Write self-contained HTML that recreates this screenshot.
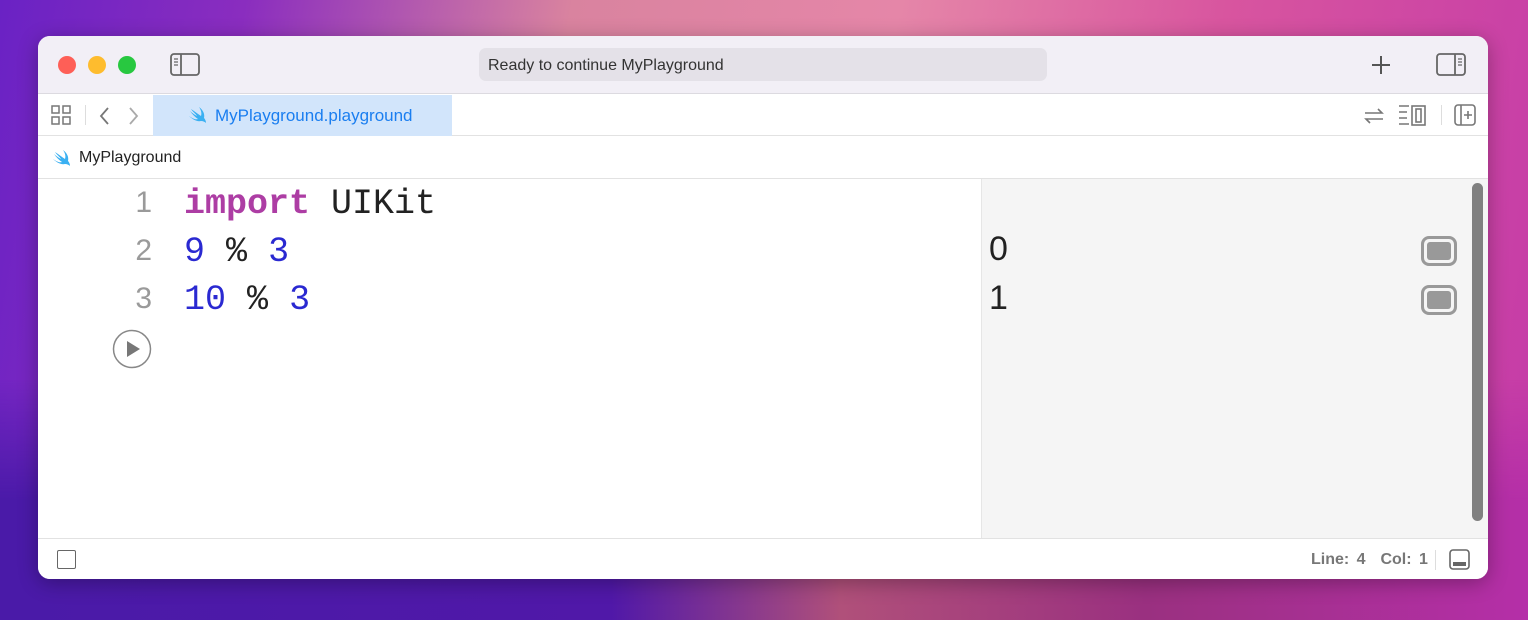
<!DOCTYPE html>
<html><head><meta charset="utf-8"><style>
*{margin:0;padding:0;box-sizing:border-box}
body{width:1528px;height:620px;overflow:hidden;position:relative;font-family:"Liberation Sans",sans-serif;
background:linear-gradient(100deg,#6a22c4 0%,#8a2dbf 15%,#d9839f 35%,#e586a8 55%,#d8559f 75%,#c43aa8 100%)}
.bg2{position:absolute;left:0;top:380px;width:1528px;height:240px;background:linear-gradient(90deg,#4a1aa8 0%,#5018a8 40%,#b0507a 55%,#9a3080 75%,#b52fa8 100%);-webkit-mask-image:linear-gradient(180deg,transparent 0%,#000 50%);mask-image:linear-gradient(180deg,transparent 0%,#000 50%)}
.win{position:absolute;left:38px;top:36px;width:1450px;height:543px;border-radius:12px;overflow:hidden;background:#fff;box-shadow:0 4px 20px rgba(0,0,0,.3)}
.title{position:absolute;left:0;top:0;width:100%;height:58px;background:#f2eff6;border-bottom:1px solid #dcdae0}
.dot{position:absolute;top:20px;width:18px;height:18px;border-radius:50%}
.addr{position:absolute;left:441px;top:12px;width:568px;height:33px;border-radius:7px;background:#e4e1e8;font-size:16px;color:#333;padding:9px 9px}
.tabs{position:absolute;left:0;top:59px;width:100%;height:41px;border-bottom:1px solid #e2e2e2;background:#fff}
.tab{position:absolute;left:115px;top:0;width:299px;height:41px;background:#d2e5fb;color:#1a7ef0;font-size:17px;padding:11px 0 0 62px}
.crumb{position:absolute;left:0;top:101px;width:100%;height:42px;border-bottom:1px solid #e2e2e2;font-size:16px;color:#222;padding:12px 0 0 41px}
.edit{position:absolute;left:0;top:143px;width:100%;height:359px}
.res{position:absolute;left:943px;top:0;width:507px;height:359px;background:#f5f5f5;border-left:1px solid #e6e6e6}
.code{position:absolute;font-family:"Liberation Mono",monospace;font-size:35px;line-height:48px}
.ln{position:absolute;left:88px;width:26px;text-align:right;font-family:"Liberation Sans",sans-serif;font-size:30px;color:#9a9a9a}
.kw{color:#ad3da4}.num{color:#2a29d1}.pl{color:#222}
.status{position:absolute;left:0;top:502px;width:100%;height:41px;border-top:1px solid #e2e2e2;background:#fff}
.rb{position:absolute;left:1383px;width:36px;height:30px;border:3px solid #999;border-radius:8px}
.rb::after{content:"";position:absolute;left:3px;top:3px;right:3px;bottom:3px;background:#999;border-radius:3px}
.sw{position:absolute}
</style></head><body>
<div class="bg2"></div>
<div class="win">
 <div class="title">
  <div class="dot" style="left:20px;background:#fe5f57"></div>
  <div class="dot" style="left:50px;background:#febc2e"></div>
  <div class="dot" style="left:80px;background:#28c840"></div>
  <svg style="position:absolute;left:132px;top:17px" width="30" height="24" viewBox="0 0 30 24"><rect x="1" y="1" width="28" height="21" rx="3" fill="none" stroke="#666" stroke-width="1.8"/><line x1="11" y1="1" x2="11" y2="22" stroke="#666" stroke-width="1.8"/><path d="M4 6h4M4 9h4M4 12h4" stroke="#666" stroke-width="1.3"/></svg>
  <div class="addr">Ready to continue MyPlayground</div>
  <svg style="position:absolute;left:1333px;top:19px" width="20" height="20"><path d="M10 1v18M1 10h18" stroke="#555" stroke-width="2"/></svg>
  <svg style="position:absolute;left:1398px;top:17px" width="30" height="24" viewBox="0 0 30 24"><rect x="1" y="1" width="28" height="21" rx="3" fill="none" stroke="#666" stroke-width="1.8"/><line x1="19" y1="1" x2="19" y2="22" stroke="#666" stroke-width="1.8"/><path d="M22 6h4M22 9h4M22 12h4" stroke="#666" stroke-width="1.3"/></svg>
 </div>
 <div class="tabs">
  <svg style="position:absolute;left:13px;top:10px" width="21" height="21" viewBox="0 0 21 21" fill="none" stroke="#777" stroke-width="1.5"><rect x="1" y="1" width="7" height="7"/><rect x="12" y="1" width="7" height="7"/><rect x="1" y="12" width="7" height="7"/><rect x="12" y="12" width="7" height="7"/></svg>
  <div style="position:absolute;left:47px;top:10px;width:1px;height:20px;background:#ddd"></div>
  <svg style="position:absolute;left:60px;top:11px" width="50" height="20" fill="none" stroke-width="1.8"><path d="M10 2 3 10l7 8" stroke="#777"/><path d="M32 2l7 8-7 8" stroke="#aaa"/></svg>
  <div class="tab"><svg class="sw" style="left:35px;top:12px" width="20" height="17" viewBox="0 0 20 17"><path d="M1 9c3 3 8 6 12 5 2 0 4 1 5 2 0-2-1-4-2-5 1-4-1-8-5-11 2 3 3 6 2 9C10 7 6 4 3 2c2 3 5 5 6 7C7 8 4 6 2 4c2 3 5 6 8 8C7 13 4 11 1 9z" fill="#3ab0f2"/></svg>MyPlayground.playground</div>
  <svg style="position:absolute;left:1325px;top:10px" width="22" height="22" fill="none" stroke="#777" stroke-width="1.6"><path d="M2 8h17l-4-4M20 14H3l4 4"/></svg>
  <svg style="position:absolute;left:1360px;top:9px" width="30" height="23" fill="none" stroke="#777" stroke-width="1.6"><path d="M1 2h10M1 8h8M1 14h8M1 20h10"/><rect x="14" y="2" width="13" height="19"/><rect x="18" y="5" width="5" height="13"/></svg>
  <div style="position:absolute;left:1403px;top:10px;width:1px;height:20px;background:#ddd"></div>
  <svg style="position:absolute;left:1416px;top:9px" width="22" height="22" fill="none" stroke="#777" stroke-width="1.6"><rect x="1" y="1" width="20" height="20" rx="3"/><path d="M7 1v20M14 7v8M10 11h8"/></svg>
 </div>
 <div class="crumb"><svg class="sw" style="left:14px;top:13px" width="20" height="17" viewBox="0 0 20 17"><path d="M1 9c3 3 8 6 12 5 2 0 4 1 5 2 0-2-1-4-2-5 1-4-1-8-5-11 2 3 3 6 2 9C10 7 6 4 3 2c2 3 5 5 6 7C7 8 4 6 2 4c2 3 5 6 8 8C7 13 4 11 1 9z" fill="#3ab0f2"/></svg>MyPlayground</div>
 <div class="edit">
  <div class="res"></div>
  <div class="ln" style="top:7px">1</div>
  <div class="ln" style="top:55px">2</div>
  <div class="ln" style="top:103px">3</div>
  <div class="code" style="left:146px;top:1px"><span class="kw" style="font-weight:bold">import</span> <span class="pl">UIKit</span></div>
  <div class="code" style="left:146px;top:49px"><span class="num">9</span> <span class="pl">%</span> <span class="num">3</span></div>
  <div class="code" style="left:146px;top:97px"><span class="num">10</span> <span class="pl">%</span> <span class="num">3</span></div>
  <svg style="position:absolute;left:74px;top:150px" width="40" height="40"><circle cx="20" cy="20" r="18.5" fill="#fff" stroke="#888" stroke-width="1.5"/><path d="M15 12v16l13-8z" fill="#777"/></svg>
  <div style="position:absolute;left:951px;top:51px;font-size:34px;color:#222">0</div>
  <div style="position:absolute;left:951px;top:100px;font-size:34px;color:#222">1</div>
  <div class="rb" style="top:57px"></div>
  <div class="rb" style="top:106px"></div>
  <div style="position:absolute;left:1434px;top:4px;width:11px;height:338px;border-radius:6px;background:#808080"></div>
 </div>
 <div class="status">
  <div style="position:absolute;left:19px;top:11px;width:19px;height:19px;border:1.5px solid #666;border-radius:2px"></div>
  <div style="position:absolute;left:1273px;top:12px;font-size:16px;color:#777;font-weight:bold;word-spacing:3px">Line: 4 &nbsp;Col: 1</div>
  <div style="position:absolute;left:1397px;top:11px;width:1px;height:20px;background:#ddd"></div>
  <svg style="position:absolute;left:1411px;top:10px" width="22" height="22" fill="none"><rect x="1" y="1" width="19" height="19" rx="3" stroke="#666" stroke-width="1.6"/><rect x="4" y="13" width="13" height="4" fill="#666"/></svg>
 </div>
</div>
</body></html>
